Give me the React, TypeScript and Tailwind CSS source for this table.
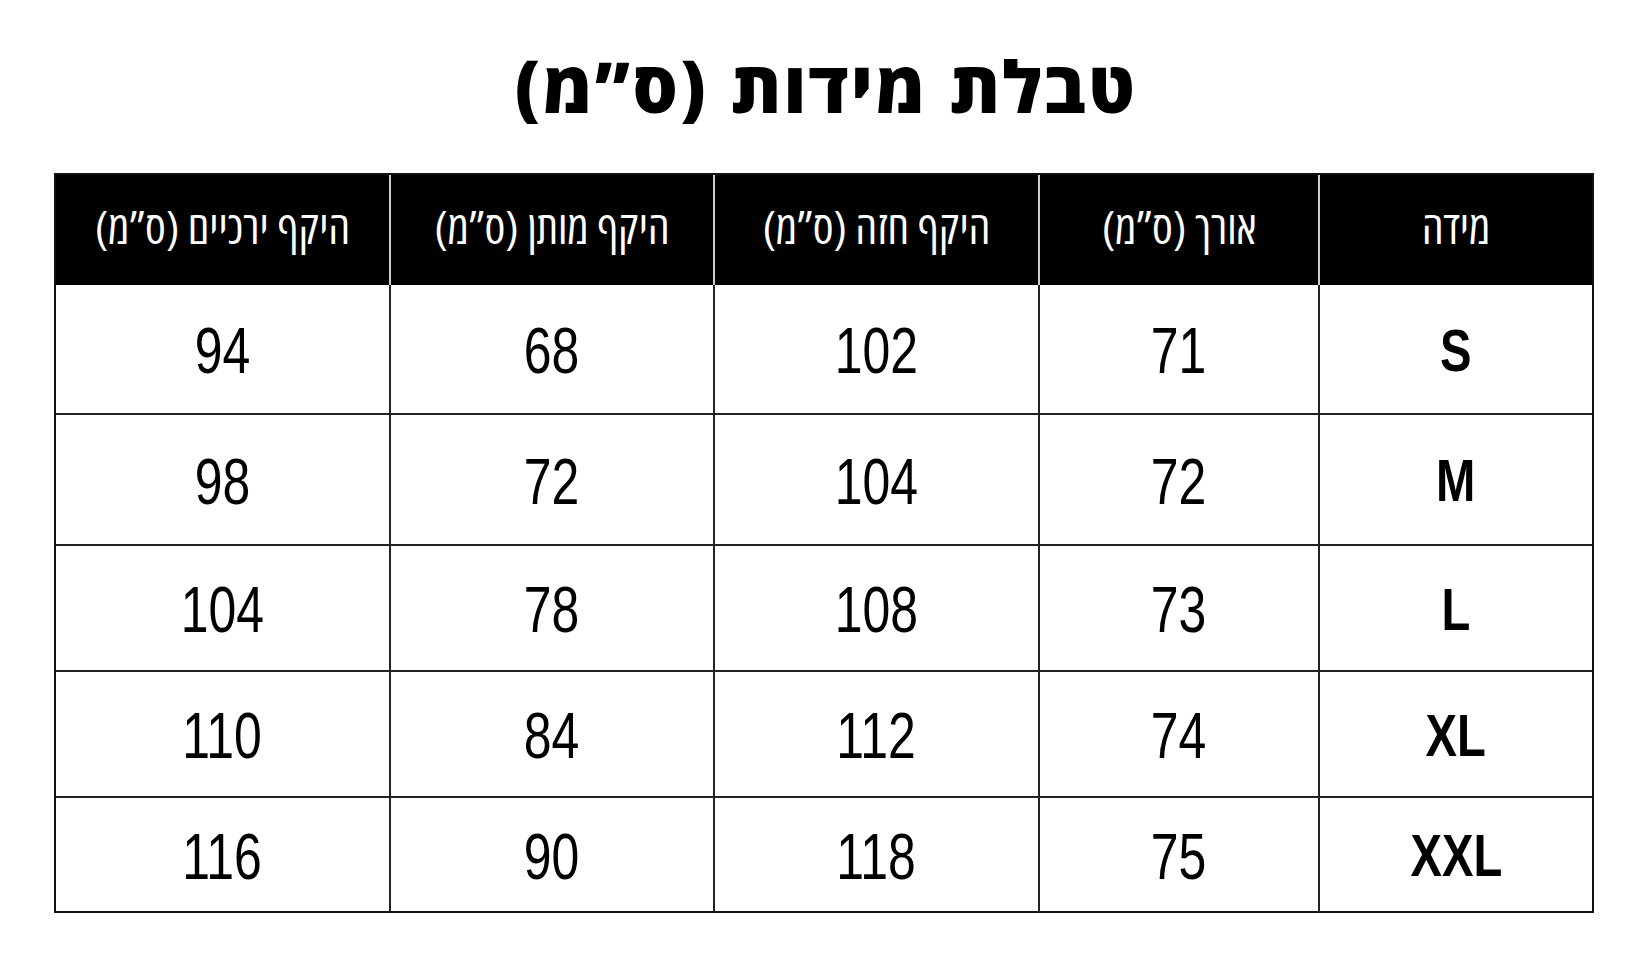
import React from 'react';

const headers = ['מידה', 'אורך (ס”מ)', 'היקף חזה (ס”מ)', 'היקף מותן (ס”מ)', 'היקף ירכיים (ס”מ)'];

const rows = [
  { size: 'S', vals: ['71', '102', '68', '94'], h: 'h-[130px]' },
  { size: 'M', vals: ['72', '104', '72', '98'], h: 'h-[131px]' },
  { size: 'L', vals: ['73', '108', '78', '104'], h: 'h-[126px]' },
  { size: 'XL', vals: ['74', '112', '84', '110'], h: 'h-[126px]' },
  { size: 'XXL', vals: ['75', '118', '90', '116'], h: 'h-[113px]' },
];

const sans = { fontFamily: '"Liberation Sans", "DejaVu Sans", sans-serif' };

const App: React.FC = () => {
  return (
    <div className="w-full h-[959px] bg-white text-black overflow-hidden">
      {/* Title */}
      <div className="h-[173px] flex items-center justify-center pb-[2px] pl-[12px]">
        <h1
          dir="rtl"
          className="text-[71px] font-extrabold leading-none tracking-[2.5px] [word-spacing:2px]"
          style={{ fontFamily: '"Open Sans", "Liberation Sans", "DejaVu Sans", sans-serif' }}
        >
          טבלת מידות (ס”מ)
        </h1>
      </div>

      {/* Table */}
      <div className="mx-[54px] w-[1540px] border-2 border-[#111]">
        <div dir="rtl" className="grid grid-cols-[274px_280px_325px_324px_333px]">
          {headers.map((h, i) => (
            <div
              key={h}
              className={`h-[110px] bg-black text-white flex items-center justify-center text-[46px] leading-none ${i < headers.length - 1 ? 'border-l-2 border-[#cfcfcf]' : ''}`}
              style={{ fontFamily: '"Open Sans", "Liberation Sans", sans-serif', fontStretch: 'condensed' }}
            >
              <span className="pb-[8px]">{h}</span>
            </div>
          ))}

          {rows.map((r, ri) => (
            <React.Fragment key={r.size}>
              <div
                className={`${r.h} flex items-center justify-center border-l-2 border-[#222] ${ri < rows.length - 1 ? 'border-b-2' : ''} text-[59px] font-bold leading-none pt-[4px]`}
                style={sans}
              >
                <span className="inline-block scale-x-[0.8]">{r.size}</span>
              </div>
              {r.vals.map((v, vi) => (
                <div
                  key={vi}
                  className={`${r.h} flex items-center justify-center ${vi < r.vals.length - 1 ? 'border-l-2' : ''} ${ri < rows.length - 1 ? 'border-b-2' : ''} border-[#222] text-[64px] leading-none pt-[4px]`}
                  style={sans}
                >
                  <span className="inline-block scale-x-[0.78]">{v}</span>
                </div>
              ))}
            </React.Fragment>
          ))}
        </div>
      </div>
    </div>
  );
};

export default App;
